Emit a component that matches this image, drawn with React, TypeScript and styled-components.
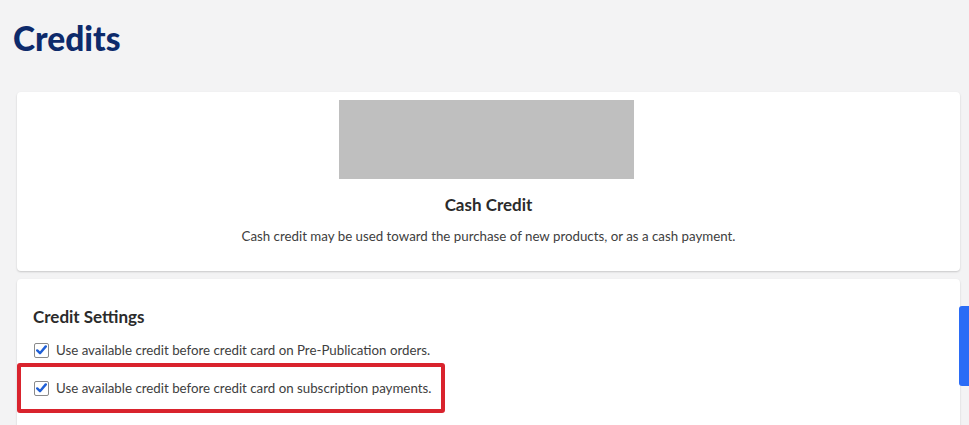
import React from 'react';
import styled, { createGlobalStyle } from 'styled-components';

const GlobalStyle = createGlobalStyle`
  html, body {
    margin: 0;
    padding: 0;
    background: #f3f3f4;
    font-family: 'Lato', 'Noto Sans', sans-serif;
    overflow: hidden;
  }
`;

interface SettingProps {
  label: string;
  highlighted?: boolean;
}

function CheckBox() {
  return (
    <Box>
      <svg width="11" height="10" viewBox="0 0 11 10">
        <path d="M1.2 5.4 L4 8.2 L9.8 1.4" fill="none" stroke="#1f5fd6" strokeWidth="2.4" strokeLinecap="round" strokeLinejoin="round" />
      </svg>
    </Box>
  );
}

function Setting({ label, highlighted }: SettingProps) {
  return (
    <SettingRow>
      {highlighted && <Highlight />}
      <CheckBox />
      <SettingLabel>{label}</SettingLabel>
    </SettingRow>
  );
}

function App() {
  return (
    <Page>
      <GlobalStyle />
      <Title>Credits</Title>
      <Cards>
        <Card>
          <CreditInfo>
            <Placeholder />
            <CardTitle>Cash Credit</CardTitle>
            <Description>
              Cash credit may be used toward the purchase of new products, or as a cash payment.
            </Description>
          </CreditInfo>
        </Card>
        <Card>
          <Settings>
            <SectionTitle>Credit Settings</SectionTitle>
            <SettingList>
              <Setting label="Use available credit before credit card on Pre-Publication orders." />
              <Setting label="Use available credit before credit card on subscription payments." highlighted />
            </SettingList>
          </Settings>
        </Card>
      </Cards>
      <SideTab />
    </Page>
  );
}

const Page = styled.div`
  position: relative;
  height: 425px;
  padding: 19px 9px 0 13px;
  box-sizing: border-box;
`;

const Title = styled.h1`
  margin: 0 0 35px;
  font-family: 'Lato', sans-serif;
  font-weight: 900;
  font-size: 33.5px;
  line-height: 38px;
  color: #0d2a6b;
`;

const Cards = styled.div`
  display: flex;
  flex-direction: column;
  gap: 8px;
  margin-left: 4px;
`;

const Card = styled.div`
  background: #fff;
  border-radius: 4px;
  box-shadow: 0 1px 2px rgba(0, 0, 0, 0.18);
`;

const CreditInfo = styled.div`
  display: flex;
  flex-direction: column;
  align-items: center;
  padding: 8px 0 27px;
`;

const Placeholder = styled.div`
  width: 295px;
  height: 79px;
  margin-right: 4px;
  background: #bfbfbf;
`;

const CardTitle = styled.h2`
  margin: 16px 0 0;
  font-size: 17px;
  line-height: 20px;
  font-weight: 700;
  color: #2b2b2b;
`;

const Description = styled.p`
  margin: 13px 0 0;
  font-size: 13.3px;
  line-height: 16px;
  color: #404040;
`;

const Settings = styled.div`
  display: flex;
  flex-direction: column;
  padding: 28px 16px 48px;
`;

const SectionTitle = styled.h3`
  margin: 0;
  font-size: 17px;
  line-height: 20px;
  font-weight: 700;
  color: #2b2b2b;
`;

const SettingList = styled.div`
  display: flex;
  flex-direction: column;
  gap: 14px;
  margin-top: 11px;
`;

const SettingRow = styled.label`
  position: relative;
  display: flex;
  align-items: center;
  gap: 7px;
  height: 24px;
  padding-left: 1px;
`;

const Box = styled.span`
  display: flex;
  align-items: center;
  justify-content: center;
  width: 13px;
  height: 13px;
  border: 1px solid #8a8a8a;
  border-radius: 2px;
  background: #fff;
`;

const SettingLabel = styled.span`
  font-size: 13.3px;
  color: #404040;
`;

const Highlight = styled.span`
  position: absolute;
  left: -16px;
  top: -13px;
  width: 428px;
  height: 50px;
  border: 4px solid #d9232d;
  border-radius: 3px;
  box-sizing: border-box;
  pointer-events: none;
`;

const SideTab = styled.div`
  position: absolute;
  right: 0;
  top: 306px;
  width: 10px;
  height: 80px;
  background: #2a6cf6;
  border-radius: 3px 0 0 3px;
`;

export default App;
